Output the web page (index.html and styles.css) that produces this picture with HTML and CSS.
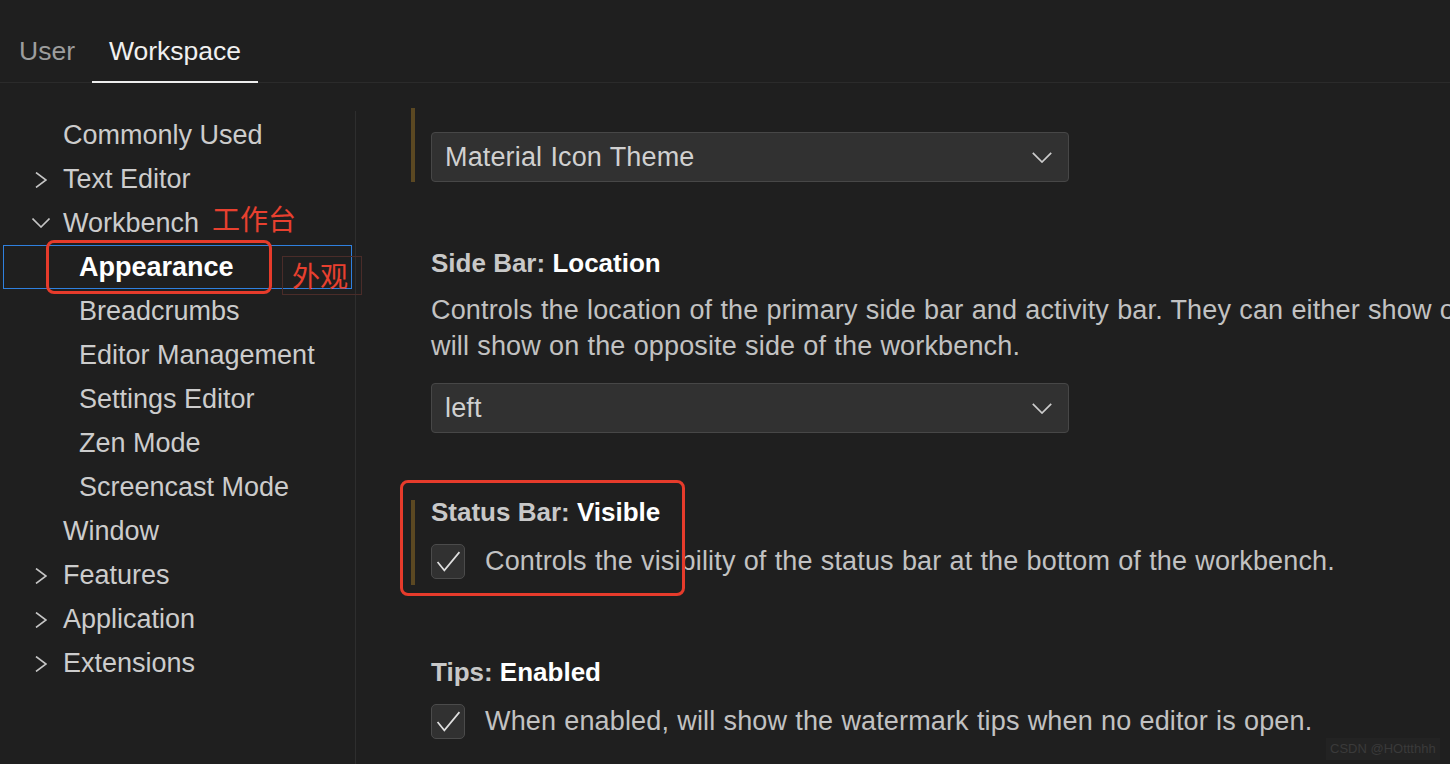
FILE: index.html
```html
<!DOCTYPE html>
<html lang="en">
<head>
<meta charset="utf-8">
<title>Settings</title>
<link rel="stylesheet" href="styles.css">
</head>
<body>
<div class="app">
  <header class="tabs">
    <div class="tab">User</div>
    <div class="tab active">Workspace</div>
  </header>
  <div class="body">
    <nav class="tree">
      <div class="row l1"><span class="twistie"></span><span class="label">Commonly Used</span></div>
      <div class="row l1"><span class="twistie"><svg class="chev-r" viewBox="0 0 12 16"><path d="M1 0.5 L11 8 L1 15.5"/></svg></span><span class="label">Text Editor</span></div>
      <div class="row l1"><span class="twistie"><svg class="chev-d" viewBox="0 0 18 10"><path d="M0.5 0.5 L9 9 L17.5 0.5"/></svg></span><span class="label">Workbench</span></div>
      <div class="row l2 selected"><span class="label">Appearance</span></div>
      <div class="row l2"><span class="label">Breadcrumbs</span></div>
      <div class="row l2"><span class="label">Editor Management</span></div>
      <div class="row l2"><span class="label">Settings Editor</span></div>
      <div class="row l2"><span class="label">Zen Mode</span></div>
      <div class="row l2"><span class="label">Screencast Mode</span></div>
      <div class="row l1"><span class="twistie"></span><span class="label">Window</span></div>
      <div class="row l1"><span class="twistie"><svg class="chev-r" viewBox="0 0 12 16"><path d="M1 0.5 L11 8 L1 15.5"/></svg></span><span class="label">Features</span></div>
      <div class="row l1"><span class="twistie"><svg class="chev-r" viewBox="0 0 12 16"><path d="M1 0.5 L11 8 L1 15.5"/></svg></span><span class="label">Application</span></div>
      <div class="row l1"><span class="twistie"><svg class="chev-r" viewBox="0 0 12 16"><path d="M1 0.5 L11 8 L1 15.5"/></svg></span><span class="label">Extensions</span></div>
    </nav>
    <main class="settings">
      <section class="item item-first">
        <div class="mod-bar bar-first"></div>
        <div class="content">
          <div class="select">
            <span>Material Icon Theme</span>
            <svg class="chev-select" viewBox="0 0 20 11"><path d="M0.8 0.8 L10 10 L19.2 0.8"/></svg>
          </div>
        </div>
      </section>
      <section class="item item-sidebar">
        <div class="no-bar"></div>
        <div class="content">
          <div class="title"><span class="cat">Side Bar: </span><span class="name">Location</span></div>
          <div class="desc">Controls the location of the primary side bar and activity bar. They can either show on the left or right of the workbench. The secondary side bar<br>will show on the opposite side of the workbench.</div>
          <div class="select select-gap">
            <span>left</span>
            <svg class="chev-select" viewBox="0 0 20 11"><path d="M0.8 0.8 L10 10 L19.2 0.8"/></svg>
          </div>
        </div>
      </section>
      <section class="item item-status">
        <div class="mod-bar bar-status"></div>
        <div class="content">
          <div class="title"><span class="cat">Status Bar: </span><span class="name">Visible</span></div>
          <div class="check-row">
            <span class="checkbox"><svg viewBox="0 0 24 20"><path d="M1.5 10.5 L8 18.5 L22.5 1"/></svg></span>
            <span class="check-label">Controls the visibility of the status bar at the bottom of the workbench.</span>
          </div>
        </div>
      </section>
      <section class="item item-tips">
        <div class="no-bar"></div>
        <div class="content">
          <div class="title"><span class="cat">Tips: </span><span class="name">Enabled</span></div>
          <div class="check-row">
            <span class="checkbox"><svg viewBox="0 0 24 20"><path d="M1.5 10.5 L8 18.5 L22.5 1"/></svg></span>
            <span class="check-label">When enabled, will show the watermark tips when no editor is open.</span>
          </div>
        </div>
      </section>
    </main>
  </div>

  <div class="note-box note-appearance"></div>
  <div class="note-text note-workbench">工作台</div>
  <div class="note-faint"><span>外观</span></div>
  <div class="note-box note-status"></div>
  <div class="watermark">CSDN @HOttthhh</div>
</div>
</body>
</html>
```

FILE: styles.css
```css
* { box-sizing: border-box; }

html, body {
  margin: 0;
  padding: 0;
  background: #1f1f1f;
}

body {
  width: 1450px;
  height: 764px;
  overflow: hidden;
  font-family: "Liberation Sans", Arial, sans-serif;
  font-size: 27px;
  color: #cccccc;
}

.app {
  position: relative;
  width: 1450px;
  height: 764px;
  overflow: hidden;
}

/* Tabs */
.tabs {
  display: flex;
  align-items: flex-start;
  height: 83px;
  padding-left: 2px;
  border-bottom: 1px solid #2b2b2b;
}

.tab {
  height: 83px;
  margin-bottom: -1px;
  padding: 33px 17px 0;
  line-height: 36px;
  font-size: 26.5px;
  color: #9d9d9d;
  border-bottom: 2px solid transparent;
}

.tab.active {
  color: #f0f0f0;
  border-bottom-color: #ededed;
}

/* Body */
.body {
  display: flex;
  height: 681px;
}

.tree {
  width: 356px;
  flex: none;
  margin-top: 28px;
  padding-top: 2px;
  border-right: 1px solid #2e2e2e;
}

.row {
  display: flex;
  align-items: center;
  height: 44px;
  white-space: nowrap;
}

.row.l1 { padding-left: 28px; }
.row.l2 { padding-left: 79px; }

.twistie {
  width: 35px;
  height: 44px;
  display: flex;
  align-items: center;
  padding-left: 4px;
}

.twistie svg {
  fill: none;
  stroke: #c5c5c5;
  stroke-width: 1.6;
}

.chev-r { width: 12px; height: 16px; margin-left: 3px; margin-top: 1px; }
.chev-d { width: 18px; height: 10px; }

.label { color: #cccccc; }

.row.selected {
  border: 1px solid #2f80de;
  margin-left: 3px;
  margin-right: 3px;
  padding-left: 75px;
}

.row.selected .label {
  color: #ffffff;
  font-weight: bold;
}

/* Settings list */
.settings {
  flex: 1;
  min-width: 0;
  overflow: hidden;
  padding-left: 55px;
  letter-spacing: 0.15px;
  word-spacing: 0.5px;
}

.item {
  display: flex;
  align-items: flex-start;
}

.mod-bar {
  width: 4px;
  flex: none;
  margin-right: 16px;
  background: #5b4822;
}

.no-bar {
  width: 4px;
  flex: none;
  margin-right: 16px;
}

.content { flex: none; }

.item-first { margin-top: 25px; }
.item-first .content { padding-top: 24px; }
.bar-first { height: 74px; }

.item-sidebar { margin-top: 63px; }
.item-status { margin-top: 61px; }
.bar-status { margin-top: 6px; height: 85px; }
.item-tips { margin-top: 69px; }

.title {
  line-height: 36px;
  white-space: nowrap;
  font-size: 26px;
  letter-spacing: 0;
  word-spacing: 0;
}

.title .cat {
  color: #c8c8c8;
  font-weight: bold;
}

.title .name {
  color: #ffffff;
  font-weight: bold;
}

.desc {
  margin-top: 11px;
  line-height: 36px;
  white-space: nowrap;
  color: #c2c2c2;
}

.select {
  width: 638px;
  height: 50px;
  display: flex;
  align-items: center;
  justify-content: space-between;
  padding: 0 16px 0 13px;
  background: #313131;
  border: 1px solid #474747;
  border-radius: 4px;
  color: #d0d0d0;
}

.select-gap { margin-top: 19px; }

.chev-select {
  width: 20px;
  height: 11px;
  fill: none;
  stroke: #cccccc;
  stroke-width: 1.7;
}

.check-row {
  display: flex;
  align-items: center;
  margin-top: 13px;
  gap: 20px;
  white-space: nowrap;
}

.checkbox {
  width: 34px;
  height: 35px;
  flex: none;
  display: flex;
  align-items: center;
  justify-content: center;
  background: #313131;
  border: 1px solid #4b4b4b;
  border-radius: 5px;
}

.checkbox svg {
  width: 25px;
  height: 21px;
  fill: none;
  stroke: #e0e0e0;
  stroke-width: 1.6;
}

.check-label {
  line-height: 36px;
  color: #c2c2c2;
}

/* Annotations */
.note-box {
  position: absolute;
  border: 3px solid #e63b2b;
  border-radius: 8px;
}

.note-appearance {
  left: 46px;
  top: 240px;
  width: 226px;
  height: 54px;
}

.note-status {
  left: 400px;
  top: 480px;
  width: 285px;
  height: 116px;
}

.note-text {
  position: absolute;
  font-family: "Noto Sans CJK SC", sans-serif;
  color: #e8402f;
  font-size: 28px;
  line-height: 32px;
}

.note-workbench {
  left: 212px;
  top: 202px;
}

.note-faint {
  position: absolute;
  left: 282px;
  top: 256px;
  width: 80px;
  height: 39px;
  border: 1px solid #4a2c29;
  padding-left: 9px;
  font-family: "Noto Sans CJK SC", sans-serif;
  color: #e8402f;
  font-size: 28px;
  line-height: 36px;
}

.watermark {
  position: absolute;
  left: 1326px;
  top: 738px;
  width: 114px;
  height: 22px;
  background: #232323;
  color: #3a3a3a;
  font-family: "Liberation Sans", Arial, sans-serif;
  font-size: 13px;
  line-height: 22px;
  padding-left: 4px;
  white-space: nowrap;
}
```
